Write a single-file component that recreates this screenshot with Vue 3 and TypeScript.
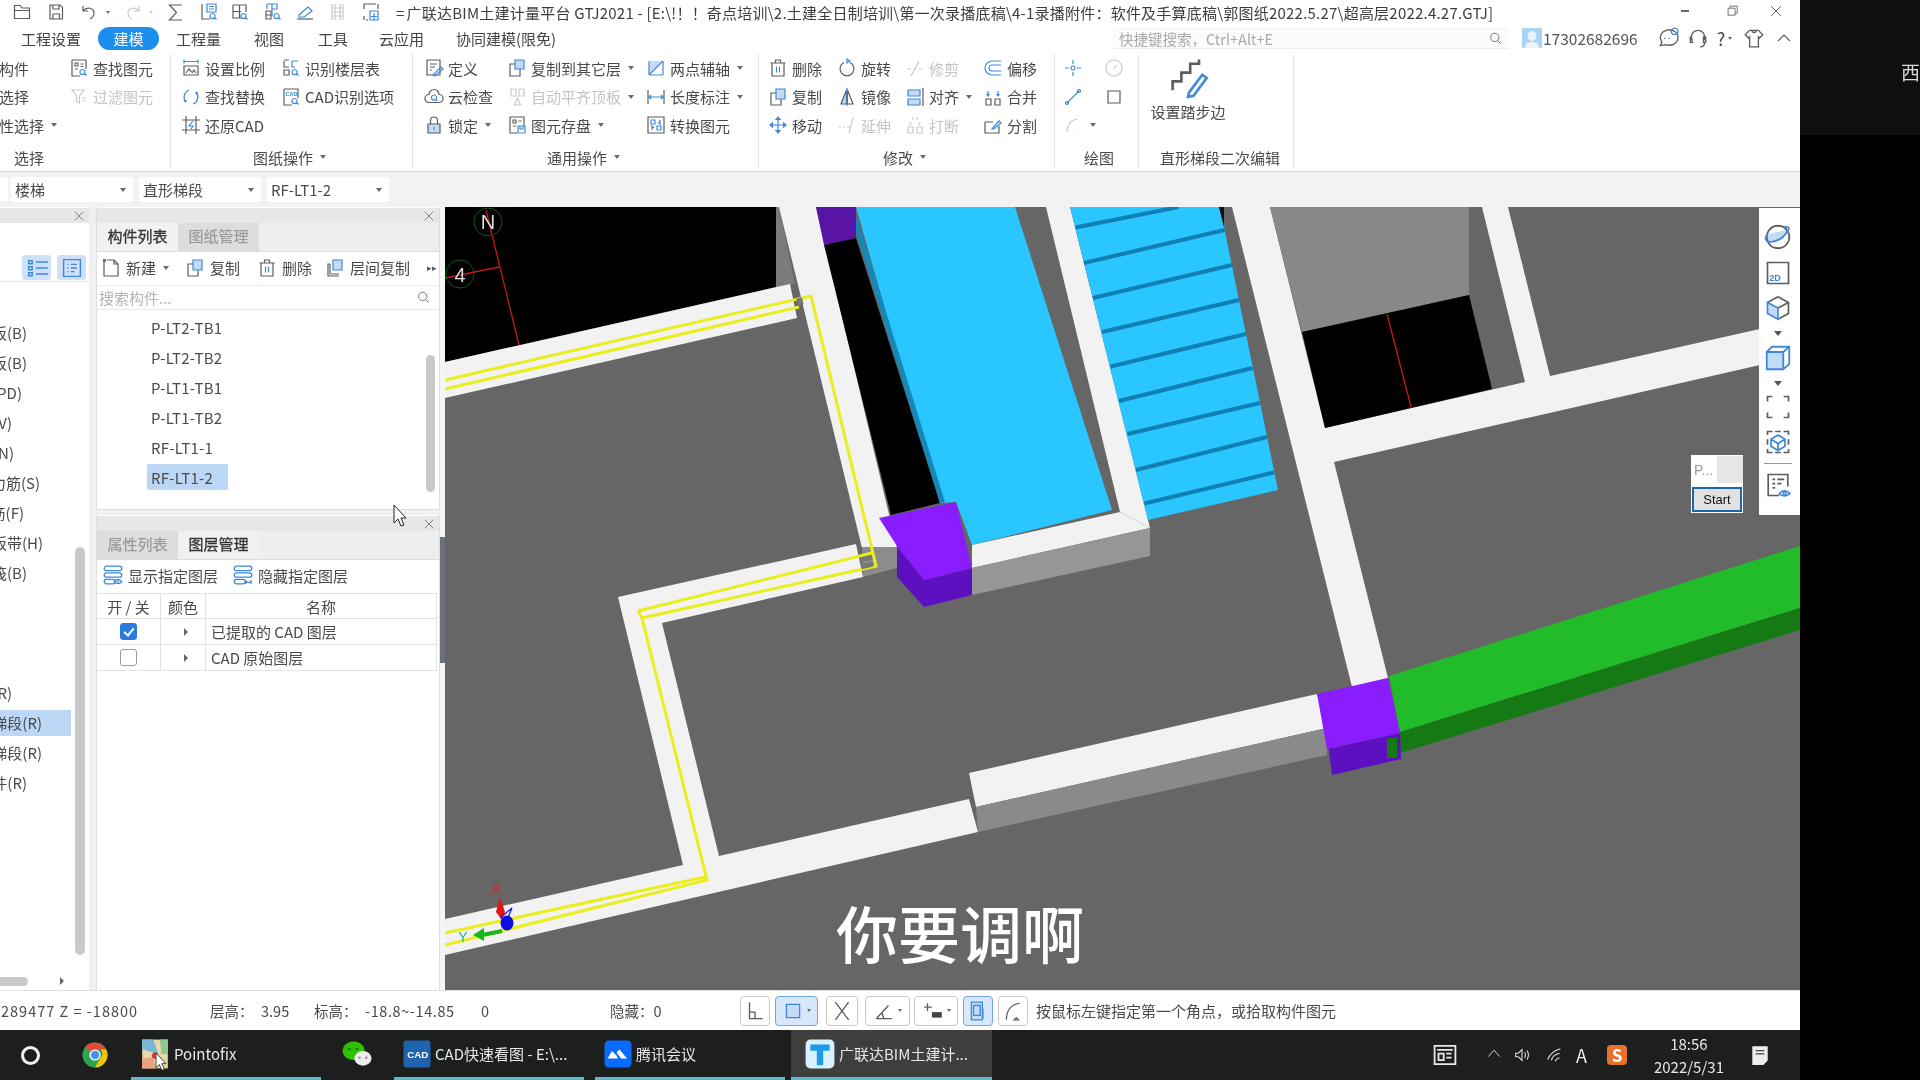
<template>
  <div class="screen">
    <div class="app">
      <!-- title bar -->
      <div class="titlebar">
        <div class="quick">
          <Ico v-for="q in quickIcons" :key="q.name" :name="q.name" :dis="q.dis" class="quick__ico" :style="{ left: q.x + 'px' }" />
          <i class="caret caret--s quick__caret" style="left: 103px" />
          <i class="caret caret--s caret--dis quick__caret" style="left: 146px" />
        </div>
        <div class="titlebar__text"><span class="titlebar__eq">=</span>{{ title }}</div>
        <div class="winctl">
          <span class="winctl__min" />
          <Ico name="restore" :size="14" />
          <Ico name="close" :size="16" />
        </div>
      </div>

      <!-- menu row -->
      <div class="menubar">
        <span
          v-for="m in menus"
          :key="m.text"
          class="menubar__item"
          :class="{ 'menubar__item--on': m.on }"
          :style="{ width: m.w + 'px', marginLeft: m.gap + 'px' }"
        >{{ m.text }}</span>
        <div class="quicksearch">
          <span>快捷键搜索，Ctrl+Alt+E</span>
          <Ico name="search" :size="15" />
        </div>
        <div class="user">
          <Ico name="avatar" class="user__avatar" :size="20" />
          <span class="user__no">17302682696</span>
        </div>
        <div class="helpicons">
          <Ico name="chat" :size="22" />
          <Ico name="headset" :size="22" />
          <span class="helpicons__q">?</span><i class="caret caret--s" />
          <Ico name="shirt" :size="22" />
          <Ico name="chevron" :size="20" />
        </div>
      </div>

      <!-- ribbon -->
      <div class="ribbon">
        <section v-for="g in ribbon" :key="g.label" class="rgroup" :style="{ width: g.w + 'px', paddingLeft: g.pad + 'px' }">
          <div class="rgroup__body">
            <div v-for="(col, ci) in g.cols" :key="ci" class="rcol" :style="{ width: col.w + 'px' }">
              <div
                v-for="(it, ii) in col.items"
                :key="ii"
                class="ritem"
                :class="{ 'ritem--dis': it.dis }"
              >
                <Ico v-if="it.icon" :name="it.icon" :dis="it.dis" />
                <span v-if="it.text" class="ritem__text" :class="{ 'ritem__text--bare': !it.icon }">{{ it.text }}</span>
                <i v-if="it.caret" class="caret" />
              </div>
            </div>
            <div v-if="g.big" class="rbig">
              <Ico name="stairs" :size="44" />
              <span>设置踏步边</span>
            </div>
          </div>
          <div class="rgroup__label" :style="{ marginLeft: g.labelX - g.pad + 'px' }">
            {{ g.label }}<i v-if="g.caret" class="caret" />
          </div>
        </section>
      </div>

      <!-- element selectors -->
      <div class="selectors">
        <div class="select select--cut" />
        <div v-for="s in selectors" :key="s" class="select">
          <span>{{ s }}</span><i class="caret" />
        </div>
      </div>

      <!-- workspace -->
      <div class="workspace">
        <aside class="nav">
          <div class="phead"><Ico name="x" :size="12" /></div>
          <div class="nav__views">
            <span class="nav__view"><Ico name="listview" :size="24" /></span>
            <span class="nav__view"><Ico name="cardview" :size="24" /></span>
          </div>
          <div class="nav__list">
            <div v-for="(n, i) in navItems" :key="i" class="nav__row">
              <span
                class="nav__item"
                :class="{ 'nav__item--on': n.on }"
                :style="{ width: n.on ? '71px' : n.end + 'px' }"
              ><span class="nav__label" :style="{ width: n.end + 'px' }">{{ n.text }}</span></span>
            </div>
          </div>
          <div class="nav__thumb" />
          <div class="nav__hthumb" />
          <i class="nav__harrow" />
        </aside>

        <div class="panels">
          <div class="panel panel--list">
            <div class="phead"><Ico name="x" :size="12" /></div>
            <div class="ptabs">
              <span class="ptab ptab--on">构件列表</span>
              <span class="ptab">图纸管理</span>
            </div>
            <div class="ptools">
              <span class="ptool" style="width: 84px"><Ico name="newdoc" /><b>新建</b><i class="caret" /></span>
              <span class="ptool" style="width: 72px"><Ico name="copy" /><b>复制</b></span>
              <span class="ptool" style="width: 68px"><Ico name="del" /><b>删除</b></span>
              <span class="ptool" style="width: 102px"><Ico name="layercopy" /><b>层间复制</b></span>
              <span class="ptool__more">▸▸</span>
            </div>
            <div class="psearch">
              <span>搜索构件...</span>
              <Ico name="search" :size="15" />
            </div>
            <div class="plist">
              <div
                v-for="row in parts"
                :key="row"
                class="plist__row"
                :class="{ 'plist__row--on': row === 'RF-LT1-2' }"
              >{{ row }}</div>
              <div class="plist__thumb" />
            </div>
          </div>

          <div class="panel panel--layers">
            <div class="phead"><Ico name="x" :size="12" /></div>
            <div class="ptabs">
              <span class="ptab">属性列表</span>
              <span class="ptab ptab--on">图层管理</span>
            </div>
            <div class="ltools">
              <span class="ptool"><Ico name="layershow" :size="22" /><b>显示指定图层</b></span>
              <span class="ptool"><Ico name="layerhide" :size="22" /><b>隐藏指定图层</b></span>
            </div>
            <div class="ltable">
              <div class="ltable__row ltable__row--head">
                <span>开 / 关</span><span>颜色</span><span>名称</span>
              </div>
              <div v-for="l in layers" :key="l.name" class="ltable__row">
                <span><i class="check" :class="{ 'check--on': l.on }" /></span>
                <span><i class="tri" /></span>
                <span class="ltable__name">{{ l.name }}</span>
              </div>
            </div>
          </div>
        </div>

        <div class="splitter"><i class="splitter__handle" /></div>

        <div class="canvas">
          <svg class="scene" viewBox="445 207 1355 783" width="1355" height="783">
            <rect x="445" y="207" width="1355" height="783" fill="#666" />

            <!-- upper left void with axis lines -->
            <polygon points="445,207 776,207 776,287 445,362" fill="#000" />
            <polygon points="776,207 779,207 795,284 776,288" fill="#7b7b7b" />
            <path d="M486 210 519 345M445 278 499 267" stroke="#c31a1a" stroke-width="1.3" fill="none" />
            <circle cx="488" cy="222" r="14" fill="none" stroke="#0c5a14" />
            <circle cx="460" cy="274" r="14" fill="none" stroke="#0c5a14" />
            <text x="488" y="229" class="scene__axis">N</text>
            <text x="460" y="282" class="scene__axis">4</text>

            <!-- slabs and walls -->
            <polygon points="445,362 790,284 797,318 445,398" fill="#f2f2f2" />
            <polygon points="779,207 816,207 897,548 862,548" fill="#f2f2f2" />
            <polygon points="618,597 856,544 863,577 662,623 719,856 969,799 978,832 445,955 445,919 683,865" fill="#f2f2f2" />
            <polygon points="862,547 897,547 897,568 863,577" fill="#8c8c8c" />
            <polygon points="816,207 856,207 856,238 824,245" fill="#5a14a5" />
            <polygon points="824,245 856,238 940,503 891,515" fill="#000" />

            <!-- stair flights -->
            <polygon points="856,207 1015,207 1112,510 972,545 956,502 940,503" fill="#29c6ff" />
            <polygon points="856,232 940,503 945,502 856,215" fill="#1488b8" />
            <polygon points="972,545 1120,512 1150,528 972,568" fill="#f2f2f2" />
            <polygon points="972,568 1150,528 1150,556 972,595" fill="#969696" />
            <polygon points="1046,207 1070,207 1150,528 1120,512" fill="#f2f2f2" />
            <polygon points="1070,207 1219,207 1224,227 1278,490 1148,520" fill="#29c6ff" />
            <polygon points="1219,207 1224,207 1224,227" fill="#111" />
            <line
              v-for="(s, i) in stairStripes"
              :key="i"
              :x1="s[0]" :y1="s[1]" :x2="s[2]" :y2="s[3]"
              stroke="#0f7fb4" stroke-width="4"
            />

            <!-- right hand wall, shaft -->
            <polygon points="1232,207 1270,207 1325,428 1525,382 1482,207 1508,207 1550,376 1800,320 1800,356 1334,462 1388,678 1352,687" fill="#f2f2f2" />
            <polygon points="1270,207 1469,207 1469,295 1302,332" fill="#888" />
            <polygon points="1302,332 1469,295 1492,389 1325,428" fill="#000" />
            <line x1="1387" y1="314" x2="1411" y2="407" stroke="#c31a1a" stroke-width="1.3" />

            <!-- raised beam and green beam -->
            <polygon points="969,773 1317,694 1327,728 976,807" fill="#f2f2f2" />
            <polygon points="976,807 1327,728 1327,755 978,832" fill="#8a8a8a" />
            <polygon points="1389,676 1800,546 1800,608 1400,732" fill="#22bb2a" />
            <polygon points="1400,732 1800,608 1800,630 1400,753" fill="#157a14" />

            <!-- yellow cad lines -->
            <g fill="none" stroke="#eaee1c" stroke-width="3">
              <path d="M445 380 811 296 876 566 642 618 707 880 445 945" />
              <path d="M445 389 799 307" />
              <path d="M638 611 872 553" />
              <path d="M638 611 642 618" />
              <path d="M705 877 445 933" />
            </g>
            <rect x="797" y="298" width="6" height="7" fill="#777" transform="rotate(-13 800 302)" />
            <rect x="860" y="556" width="12" height="5" fill="#777" transform="rotate(-13 866 558)" />
            <rect x="861" y="563" width="12" height="5" fill="#777" transform="rotate(-13 867 565)" />

            <!-- columns -->
            <polygon points="897,546 924,580 972,568 972,595 924,607 897,577" fill="#5c10bf" />
            <polygon points="879,518 956,502 972,568 924,580 897,546" fill="#8a1dfd" />
            <polygon points="1327,749 1400,733 1401,759 1332,775 1326,728" fill="#5c10bf" />
            <polygon points="1317,694 1388,678 1400,733 1327,749" fill="#8a1dfd" />
            <rect x="1387" y="738" width="10" height="20" fill="#157a14" />

            <!-- view axis -->
            <path d="M502 931 482 935" stroke="#17b71c" stroke-width="4" />
            <polygon points="473,935 484,928 484,941" fill="#17b71c" />
            <polygon points="500,897 505,912 502,920 496,912" fill="#e61414" />
            <path d="M500 918 512 908 505 925" stroke="#1414e0" stroke-width="1.2" fill="none" />
            <ellipse cx="507" cy="923" rx="6.5" ry="7.5" fill="#0d0de0" />
            <text x="496" y="893" class="scene__x">X</text>
            <text x="463" y="942" class="scene__y">Y</text>
          </svg>

          <div class="subtitle">你要调啊</div>

          <div class="viewbar">
            <Ico name="sphere" :size="30" />
            <Ico name="view2d" :size="28" />
            <Ico name="cube3d" :size="28" />
            <i class="viewbar__tri" />
            <Ico name="box" :size="30" />
            <i class="viewbar__tri" />
            <Ico name="corners" :size="28" />
            <Ico name="dashcube" :size="28" />
            <i class="viewbar__rule" />
            <Ico name="doceye" :size="28" />
          </div>

          <div class="recorder">
            <div class="recorder__top"><span>P...</span><i /></div>
            <div class="recorder__btn">Start</div>
          </div>
        </div>
      </div>

      <!-- status bar -->
      <div class="status">
        <span class="status__txt status__txt--wide" style="width: 209px">289477 Z = -18800</span>
        <span class="status__txt" style="width: 51px">层高：</span>
        <span class="status__txt" style="width: 53px">3.95</span>
        <span class="status__txt" style="width: 51px">标高：</span>
        <span class="status__txt status__txt--mid" style="width: 116px">-18.8~-14.85</span>
        <span class="status__txt" style="width: 129px">0</span>
        <span class="status__txt" style="width: 130px">隐藏：0</span>
        <div class="status__btns">
          <span
            v-for="b in statusBtns"
            :key="b.icon"
            class="sbtn"
            :class="{ 'sbtn--on': b.on }"
            :style="{ width: b.w + 'px', marginLeft: b.gap + 'px' }"
          ><Ico :name="b.icon" :size="22" /><i v-if="b.caret" class="caret caret--s" /></span>
        </div>
        <span class="status__hint">按鼠标左键指定第一个角点，或拾取构件图元</span>
      </div>

      <!-- taskbar -->
      <div class="taskbar">
        <span class="tb-cortana" />
        <span class="tb-slot"><Ico name="chrome" :size="28" /></span>
        <span class="tb-app tb-app--open" style="width: 190px"><Ico name="pointofix" :size="32" /><span>Pointofix</span></span>
        <span class="tb-slot tb-slot--we"><Ico name="wechat" :size="34" /></span>
        <span class="tb-app tb-app--open" style="width: 190px"><Ico name="cad" :size="30" /><span>CAD快速看图 - E:\...</span></span>
        <span class="tb-app tb-app--open tb-app--gap" style="width: 190px"><Ico name="tencent" :size="30" /><span>腾讯会议</span></span>
        <span class="tb-app tb-app--open tb-app--active" style="width: 201px"><Ico name="glodon" :size="32" /><span>广联达BIM土建计...</span></span>
        <div class="tray">
          <Ico name="news" :size="26" />
          <Ico name="trayup" :size="16" />
          <Ico name="speaker" :size="18" />
          <Ico name="wifi" :size="18" />
          <span class="tray__a">A</span>
          <span class="tray__sogou">S</span>
          <div class="tray__clock"><span>18:56</span><span>2022/5/31</span></div>
          <Ico name="notify" :size="22" />
        </div>
      </div>
    </div>

    <div class="outside">
      <div class="outside__top"><span>西</span></div>
    </div>

    <svg class="cursor cursor--a" width="14" height="24" viewBox="0 0 14 24"><path d="M1 1v18l4-4 3 7 3-1-3-7h5z" fill="#fff" stroke="#222" /></svg>
    <svg class="cursor cursor--b" width="12" height="20" viewBox="0 0 14 24"><path d="M1 1v18l4-4 3 7 3-1-3-7h5z" fill="#fff" stroke="#222" /></svg>
  </div>
</template>

<script setup lang="ts">
import { h } from 'vue';
import type { FunctionalComponent } from 'vue';

interface IconDef {
  f?: string; // light blue fill
  d?: string; // dark stroke
  b?: string; // blue stroke
  s?: string; // solid fill
  sc?: string; // solid fill colour
  t?: [string, number, number, number, string]; // label, x, y, size, colour
}

const SEARCH = 'M13.5 11.5a2.6 2.6 0 1 0 .01 0M15.5 15.5l2 2';
const icons: Record<string, IconDef> = {
  folder: { d: 'M2.5 16.5V3.5h5.5l2 2.5h7.5v10.5zM2.5 8.5h15' },
  save: { d: 'M4 3h10l2.5 2.5v11.5H4zM7 3v4h6V3M7 17v-5h6.5v5' },
  undo: { d: 'M4 4v5h5M4 9c4-5 11-3 11 2 0 3-2 5-4 6' },
  redo: { d: 'M16 4v5h-5M16 9c-4-5-11-3-11 2 0 3 2 5 4 6' },
  sigma: { d: 'M16 3H3.5l7 7.5-7 7.5H16' },
  listq: { d: 'M3 2v15h8', b: 'M8 2h9v8H8zM10 4.5h5M10 7h5' + SEARCH },
  gridq: { d: 'M3 3h13v7M3 3v13h8M9.5 3v13M3 9.5h8', b: SEARCH },
  splitq: { d: 'M3 9h5v8H3zM3 13h5', b: 'M9 2h5v5H9zM9 2v12M4 2h5M4 2v5' + SEARCH },
  pen: { d: 'M2 17h16', b: 'M4 13l9-8 4 4-8 6H4z' },
  rung: { d: 'M4 2v16M15 2v16M4 6h11M4 10h11M4 14h11M7 2v16M12 2v16' },
  transfer: { d: 'M5 2h10M5 2H3v5M17 2v5M3 18v-4M5 18h2', b: 'M13 11v7M10 14.5h6M9 9h8v9H9z' },
  findel: { d: 'M3 2h14v9M3 2v16h8M6 5h3v3H6zM11.5 6h3M6 11h3M11.5 8.5h3', b: SEARCH },
  filter: { d: 'M3 3h12l-4.5 6v7l-3-1.5V9zM13 11h4M13 14h4' },
  setscale: { b: 'M3 3.5h14M3 1.5v4M17 1.5v4', d: 'M3 8h14v9H3zM5 15l3-4 2.5 3M11 15l2-3 2 3' },
  replace: { b: 'M8 3a7.5 7.5 0 0 0-3 12M5 15l-2-1M5 15v-2M12 17a7.5 7.5 0 0 0 3-12M15 5l2 1M15 5v2' },
  restorecad: { d: 'M5 1v18M15 1v18M1 5h18M1 15h18', b: 'M12 6l-4 5h4l-2 3' },
  floorq: { d: 'M3 3v6h5M3 2h5M3 12h5v5H3z', b: 'M11 3h6M11 3v6h3' + SEARCH },
  cadopt: { d: 'M3 2h14v9M3 2v16h8', t: ['CAD', 4.5, 9, 5.5, '#2f7fd0'], b: SEARCH },
  define: { d: 'M3 2h13v15H3zM6 6h7M6 9h5M6 12h2', b: 'M9 17l8-8 2 2-8 7z' },
  cloud: { d: 'M5 15.5a4 4 0 0 1 0-8 5 5 0 0 1 10 0 4 4 0 0 1 0 8z', b: 'M10 8a2.6 2.6 0 1 0 .01 0M12 13l1.5 1' },
  lock: { f: 'M4 9h12v9H4z', d: 'M4 9h12v9H4zM6.5 9V5.5a3.5 3.5 0 0 1 7 0V9', b: 'M10 12v3' },
  copyto: { f: 'M8 2h9v9H8z', b: 'M8 2h9v9H8z', d: 'M8 6H3v12h10v-7' },
  autoalign: { d: 'M4 2h5v7H4zM12 2h5v7h-5zM10.5 11l3 7h-6z' },
  saveel: { d: 'M3 2h14v9M3 2v16h7M6 5h3v3H6zM11.5 6h3M6 11h3', b: 'M11 11h7v7h-7zM13 11v3h3v-3' },
  twopoint: { b: 'M3 17 17 3M3 3v14M3 17h14M17 3v14', f: 'M3 3 17 3 3 17z' },
  dim: { d: 'M2 3v14M18 3v14', b: 'M3 10h14M5 8l-2 2 2 2M15 8l2 2-2 2' },
  convert: { d: 'M2 2h16v16H2z', b: 'M5 5h4v4H5zM11 11h4v4h-4zM14 5v4l-2-2M6 15v-4l2 2' },
  del: { d: 'M4 5h12v13H4zM2.5 5h15M7.5 5V2h5v3', b: 'M8.5 8.5v6M11.5 8.5v6' },
  copy: { f: 'M8 2h9v10H8z', b: 'M8 2h9v10H8z', d: 'M8 6H3v12h10v-6' },
  move: { b: 'M10 2v16M2 10h16M10 2 8 4.5h4zM10 18l-2-2.5h4zM2 10l2.5-2v4zM18 10l-2.5-2v4z' },
  rotate: { d: 'M7 4.5a7 7 0 1 0 6 0', b: 'M10 1v4l3-2z' },
  mirror: { f: 'M9.5 3 4 17h5.5z', d: 'M9.5 3 4 17h5.5zM10.5 3 16 17h-5.5z', b: 'M10 1v18' },
  trim: { d: 'M2 11h4M9 11h2M14 11h3M14 3 6 18' },
  align: { f: 'M3 3h12v6H3zM3 12h12v6H3z', b: 'M3 3h12v6H3zM3 12h12v6H3z', d: 'M18 1v18' },
  extend: { d: 'M2 12h2M6 12h2M10 12h3M16 3 12 18' },
  breakel: { d: 'M3 12h5v6H3zM12 12h5v6h-5zM5 7l1 3M15 7l-1 3M8 2v3M12 2v3' },
  offset: { b: 'M18 3H9a7 7 0 0 0 0 14h9M18 7H9a3 3 0 0 0 0 6h9' },
  merge: { d: 'M3 12h5v6H3zM12 12h5v6h-5z', b: 'M5 4v5M15 4v5M3.5 7 5 9l1.5-2M13.5 7 15 9l1.5-2' },
  splitel: { d: 'M2 7h8M2 7v11h14v-7', b: 'M9 14l7-8 2 2-7 6z' },
  point: { b: 'M10 2v4M10 14v4M2 10h4M14 10h4M10 8a2 2 0 1 0 .01 0' },
  clock: { d: 'M10 2a8 8 0 1 0 .01 0M10 10l3-3' },
  linedraw: { b: 'M4 16 16 4M4 14.5a1.5 1.5 0 1 0 .01 0M16 2.5a1.5 1.5 0 1 0 .01 0' },
  rectdraw: { d: 'M4 4h12v12H4z' },
  arcdraw: { d: 'M4 17C4 10 8 5 14 4M15 16h1' },
  stairs: { d: 'M3 16V12h4V8h4V4h4V2', b: 'M10.5 17l6-8 2 1.5-6 8-2.5.5z' },
  search: { d: 'M9 3a5.5 5.5 0 1 0 .01 0M13 13l4 4' },
  avatar: { s: 'M0 0h20v20H0z', sc: '#a9d3f7', f: 'M3 20c0-5 3-6 7-6s7 1 7 6zM10 3a4.5 5 0 1 0 .01 0' },
  chat: { d: 'M3 17l1.5-3.5A8 7 0 1 1 8 16zM7 10v1M11 10v1', b: 'M16 1a3 3 0 1 0 .01 0' },
  headset: { d: 'M4 12V9a6 6 0 0 1 12 0v3M4 9H3v5h2zM15 9h2v5h-2zM16 14c0 3-2 4-4 4' },
  shirt: { d: 'M6 3h8l4 4-3 3-1-1v9H6V9l-1 1-3-3zM8 3a2 2 0 0 0 4 0' },
  chevron: { d: 'M4 13l6-6 6 6' },
  restore: { d: 'M3 6h10v10H3zM6 6V3h10v10h-3' },
  close: { d: 'M4 4l12 12M16 4 4 16' },
  x: { d: 'M3 3l14 14M17 3 3 17' },
  listview: { b: 'M9 5h10M9 10h10M9 15h10M3 4h3v2.5H3zM3 9h3v2.5H3zM3 14h3v2.5H3z' },
  cardview: { b: 'M3 3h14v14H3zM6 7h1M9 7h5M6 10h1M9 10h5M6 13h1M9 13h3' },
  newdoc: { d: 'M3 2v16h14V6l-4-4H6M13 2v4h4', s: 'M2 1h3v3H2z', sc: '#3b82d6' },
  layercopy: { f: 'M8 2h9v10H8z', b: 'M8 2h9v10H8z', d: 'M5 6H3v12h11M5 6v10h9' },
  layershow: { b: 'M4 2h12a2 2 0 0 1 0 4H4a2 2 0 0 1 0-4zM4 8h12a2 2 0 0 1 0 4H4a2 2 0 0 1 0-4zM4 14h6a2 2 0 0 1 0 4H4a2 2 0 0 1 0-4zM11 16c2-2.5 5-2.5 7 0-2 2.5-5 2.5-7 0zM14.5 15v2' },
  layerhide: { b: 'M4 2h12a2 2 0 0 1 0 4H4a2 2 0 0 1 0-4zM4 8h12a2 2 0 0 1 0 4H4a2 2 0 0 1 0-4zM4 14h6a2 2 0 0 1 0 4H4a2 2 0 0 1 0-4zM12 15c2 2.5 4 2.5 6 0M13 17l-1 1M17 17l1 1' },
  sphere: { f: 'M3 8c-3 4 0 6 4 5 5-1 8-4 10-8z', d: 'M10 2.5a7.5 7.5 0 1 0 .01 0', b: 'M3 8c-3 4 0 6 4 5 5-1 8-4 10-8 1-2-2-2-3-1' },
  view2d: { d: 'M2.5 2.5h15v15h-15z', t: ['2D', 3.8, 16, 6.5, '#3d86d6'] },
  cube3d: { f: 'M2.5 6 10 10v8l-7.5-4z', d: 'M10 2l7.5 4v8L10 18M10 2 2.5 6M10 10l7.5-4', b: 'M2.5 6 10 10v8l-7.5-4z' },
  box: { f: 'M2.5 6h11v11.5h-11z', b: 'M2.5 6h11v11.5h-11zM2.5 6 6 2.5h11.5v11.5L13.5 17.5M13.5 6l4-3.5' },
  corners: { d: 'M2.5 6V2.5H6M14 2.5h3.5V6M2.5 14v3.5H6M14 17.5h3.5V14' },
  dashcube: { d: 'M2.5 5V2.5H6M8 2.5h4M14 2.5h3.5V5M2.5 8v4M17.5 8v4M2.5 15v2.5H6M8 17.5h4M14 17.5h3.5V15', b: 'M10 5l5 3v5l-5 3-5-3V8zM5 8l5 3 5-3M10 11v5' },
  doceye: { d: 'M17 11V2.5H3v15h8M6 6h2M9.5 6h5M6 9h2M9.5 9h3M6 12h2', b: 'M11 16c2-2.5 5-2.5 7.5 0-2.5 2.5-5.5 2.5-7.5 0zM14.7 15a1 1 0 1 0 .01 0' },
  ortho: { d: 'M5 2v15h12M5 11h5v6' },
  rectsnap: { f: 'M4 4h12v12H4z', b: 'M4 4h12v12H4z' },
  cross: { d: 'M4 2l12 16M16 2 4 18' },
  anglesnap: { d: 'M3 17h14M3 17 14 5M8 11.5l2 5.5' },
  plusbox: { d: 'M5 3v7M2 6.5h7', s: 'M9 11h9v5H9z', sc: '#444' },
  devmode: { f: 'M4 2h10v16H4z', b: 'M4 2h10v16H4zM6 5h6v9H6z', s: 'M8 8h7v9H8z', sc: '#2f7fd0' },
  arcsnap: { d: 'M4 18C4 10 8 4 16 3M13 16l2 2h-4z' },
  chrome: { s: 'M10 1a9 9 0 1 0 .01 0', sc: '#2ea44f' },
  pointofix: { s: 'M2 1h16v18H2z', sc: '#e8d9a8' },
  wechat: { s: 'M8 2a6.5 5.5 0 1 0 .01 0', sc: '#2dc100' },
  cad: { s: 'M3 1h14a2 2 0 0 1 2 2v14a2 2 0 0 1-2 2H3a2 2 0 0 1-2-2V3a2 2 0 0 1 2-2z', sc: '#1f63ad', t: ['CAD', 3.5, 12.5, 6.5, '#fff'] },
  tencent: { s: 'M4 1h12a3 3 0 0 1 3 3v12a3 3 0 0 1-3 3H4a3 3 0 0 1-3-3V4a3 3 0 0 1 3-3z', sc: '#0a6cff' },
  glodon: { s: 'M4 1h12a3 3 0 0 1 3 3v12a3 3 0 0 1-3 3H4a3 3 0 0 1-3-3V4a3 3 0 0 1 3-3z', sc: '#d9f1ff' },
  news: {},
  trayup: { d: 'M3 12l7-8 7 8' },
  speaker: { d: 'M3 8v4h3l4 4V4L6 8zM13 7c1 2 1 4 0 6M15.5 5c2 3 2 7 0 10' },
  wifi: { d: 'M2 15C4 9 9 5 16 3M6 16c1-4 4-7 9-8M10 17c1-2 2-3 5-4' },
  notify: { s: 'M3 2h14v13l-4 4H3z', sc: '#eee' },
};

const Ico: FunctionalComponent<{ name: string; dis?: boolean; size?: number }> = (p) => {
  const def = icons[p.name] ?? {};
  const size = p.size ?? 20;
  const dark = p.dis ? '#c9c9c9' : '#5d5d5d';
  const blue = p.dis ? '#c9c9c9' : '#3f88da';
  const kids = [];
  if (def.s) kids.push(h('path', { d: def.s, fill: def.sc }));
  if (def.f) kids.push(h('path', { d: def.f, fill: p.name === 'avatar' ? '#eaf4fe' : '#c3dbf6' }));
  if (p.name === 'chrome') {
    kids.push(h('path', { d: 'M10 1a9 9 0 0 1 8 5h-8a4 4 0 0 0-3.5 2L3 4a9 9 0 0 1 7-3z', fill: '#e04a3a' }));
    kids.push(h('path', { d: 'M18 6a9 9 0 0 1-8 13l4-7a4 4 0 0 0 0-6z', fill: '#f4c20d' }));
    kids.push(h('circle', { cx: 10, cy: 10, r: 4, fill: '#fff' }));
    kids.push(h('circle', { cx: 10, cy: 10, r: 3, fill: '#4a8ef0' }));
  }
  if (p.name === 'pointofix') {
    kids.push(h('path', { d: 'M2 1h7l3 9-10-3z', fill: '#7ab6d8' }));
    kids.push(h('path', { d: 'M2 13l7-1 1 7H2z', fill: '#e8a27c' }));
    kids.push(h('path', { d: 'M13 1h5v9h-4z', fill: '#8fc98f' }));
    kids.push(h('circle', { cx: 10, cy: 11, r: 2, fill: '#d63b3b' }));
  }
  if (p.name === 'wechat') {
    kids.push(h('ellipse', { cx: 13.5, cy: 12, rx: 5, ry: 4.3, fill: '#eee' }));
    kids.push(h('path', { d: 'M5.5 6v1M10 6v1', stroke: '#145c00', 'stroke-width': 1.4 }));
    kids.push(h('path', { d: 'M11.5 11v1M15.5 11v1', stroke: '#777', 'stroke-width': 1.2 }));
  }
  if (p.name === 'tencent') {
    kids.push(h('path', { d: 'M3 13l3-5 3 3 1 2zM9 9l2-2 5 6h-4z', fill: '#fff' }));
  }
  if (p.name === 'glodon') {
    kids.push(h('path', { d: 'M4 4h12v4h-4v9H8V8H4z', fill: '#1d9be8' }));
  }
  if (p.name === 'news') {
    kids.push(h('path', { d: 'M2 3h16v14H2zM4 6h12M5 9h4v5H5zM11 9h4M11 12h4', stroke: '#e8e8e8', 'stroke-width': 1.4, fill: 'none' }));
  }
  if (p.name === 'notify') {
    kids.push(h('path', { d: 'M6 6h8M6 9h8', stroke: '#444' }));
  }
  const onDark = ['trayup', 'speaker', 'wifi'].includes(p.name);
  if (def.d) kids.push(h('path', { d: def.d, fill: 'none', stroke: onDark ? '#ddd' : dark, 'stroke-width': 1.2 }));
  if (def.b) kids.push(h('path', { d: def.b, fill: 'none', stroke: blue, 'stroke-width': 1.2 }));
  if (def.t) {
    const [label, x, y, fs, color] = def.t;
    kids.push(h('text', { x, y, 'font-size': fs, 'font-family': 'Liberation Sans, sans-serif', 'font-weight': 700, fill: color }, label));
  }
  return h('svg', { class: 'ico', width: size, height: size, viewBox: '0 0 20 20' }, kids);
};

const title =
  '广联达BIM土建计量平台 GTJ2021 - [E:\\!！！奇点培训\\2.土建全日制培训\\第一次录播底稿\\4-1录播附件：软件及手算底稿\\郭图纸2022.5.27\\超高层2022.4.27.GTJ]';

const quickIcons = [
  { name: 'folder', x: 12 },
  { name: 'save', x: 46 },
  { name: 'undo', x: 79 },
  { name: 'redo', x: 123, dis: true },
  { name: 'sigma', x: 166 },
  { name: 'listq', x: 199 },
  { name: 'gridq', x: 230 },
  { name: 'splitq', x: 263 },
  { name: 'pen', x: 295 },
  { name: 'rung', x: 328, dis: true },
  { name: 'transfer', x: 361 },
];

const menus = [
  { text: '工程设置', w: 60, gap: 21 },
  { text: '建模', w: 61, gap: 17, on: true },
  { text: '工程量', w: 45, gap: 17 },
  { text: '视图', w: 30, gap: 33 },
  { text: '工具', w: 30, gap: 34 },
  { text: '云应用', w: 45, gap: 31 },
  { text: '协同建模(限免)', w: 100, gap: 32 },
];

interface RItem { icon?: string; text?: string; caret?: boolean; dis?: boolean }
interface RGroup {
  label: string; w: number; pad: number; labelX: number; caret?: boolean; big?: boolean;
  cols: { w: number; items: RItem[] }[];
}

const ribbon: RGroup[] = [
  {
    label: '选择', w: 171, pad: 0, labelX: 14,
    cols: [
      { w: 69, items: [{ text: '构件' }, { text: '选择' }, { text: '性选择', caret: true }] },
      { w: 90, items: [{ icon: 'findel', text: '查找图元' }, { icon: 'filter', text: '过滤图元', dis: true }] },
    ],
  },
  {
    label: '图纸操作', w: 242, pad: 10, labelX: 82, caret: true,
    cols: [
      { w: 100, items: [{ icon: 'setscale', text: '设置比例' }, { icon: 'replace', text: '查找替换' }, { icon: 'restorecad', text: '还原CAD' }] },
      { w: 125, items: [{ icon: 'floorq', text: '识别楼层表' }, { icon: 'cadopt', text: 'CAD识别选项' }] },
    ],
  },
  {
    label: '通用操作', w: 346, pad: 11, labelX: 134, caret: true,
    cols: [
      { w: 83, items: [{ icon: 'define', text: '定义' }, { icon: 'cloud', text: '云检查' }, { icon: 'lock', text: '锁定', caret: true }] },
      { w: 139, items: [{ icon: 'copyto', text: '复制到其它层', caret: true }, { icon: 'autoalign', text: '自动平齐顶板', caret: true, dis: true }, { icon: 'saveel', text: '图元存盘', caret: true }] },
      { w: 110, items: [{ icon: 'twopoint', text: '两点辅轴', caret: true }, { icon: 'dim', text: '长度标注', caret: true }, { icon: 'convert', text: '转换图元' }] },
    ],
  },
  {
    label: '修改', w: 296, pad: 9, labelX: 124, caret: true,
    cols: [
      { w: 69, items: [{ icon: 'del', text: '删除' }, { icon: 'copy', text: '复制' }, { icon: 'move', text: '移动' }] },
      { w: 68, items: [{ icon: 'rotate', text: '旋转' }, { icon: 'mirror', text: '镜像' }, { icon: 'extend', text: '延伸', dis: true }] },
      { w: 78, items: [{ icon: 'trim', text: '修剪', dis: true }, { icon: 'align', text: '对齐', caret: true }, { icon: 'breakel', text: '打断', dis: true }] },
      { w: 70, items: [{ icon: 'offset', text: '偏移' }, { icon: 'merge', text: '合并' }, { icon: 'splitel', text: '分割' }] },
    ],
  },
  {
    label: '绘图', w: 84, pad: 8, labelX: 29,
    cols: [
      { w: 41, items: [{ icon: 'point' }, { icon: 'linedraw' }, { icon: 'arcdraw', caret: true, dis: true }] },
      { w: 30, items: [{ icon: 'clock', dis: true }, { icon: 'rectdraw' }] },
    ],
  },
  { label: '直形梯段二次编辑', w: 155, pad: 0, labelX: 21, big: true, cols: [] },
];

const selectors = ['楼梯', '直形梯段', 'RF-LT1-2'];

const navItems = [
  { text: '板(B)', end: 27 },
  { text: '板(B)', end: 27 },
  { text: '(PD)', end: 22 },
  { text: 'V)', end: 12 },
  { text: 'N)', end: 14 },
  { text: '力筋(S)', end: 40 },
  { text: '筋(F)', end: 24 },
  { text: '板带(H)', end: 43 },
  { text: '筏(B)', end: 27 },
  { text: '', end: 0 },
  { text: '', end: 0 },
  { text: '', end: 0 },
  { text: 'R)', end: 12 },
  { text: '梯段(R)', end: 42, on: true },
  { text: '梯段(R)', end: 42 },
  { text: '件(R)', end: 27 },
];

const parts = ['P-LT2-TB1', 'P-LT2-TB2', 'P-LT1-TB1', 'P-LT1-TB2', 'RF-LT1-1', 'RF-LT1-2'];

const layers = [
  { name: '已提取的 CAD 图层', on: true },
  { name: 'CAD 原始图层', on: false },
];

const stairStripes = [
  [1075.5, 227.5, 1178.6, 207],
  [1084, 263, 1224.5, 230],
  [1093, 298, 1232, 265],
  [1102, 332, 1239, 300],
  [1110.7, 366.5, 1246, 334],
  [1119, 401, 1252.5, 368],
  [1127.5, 434, 1260, 403],
  [1136, 470, 1267, 437],
  [1144.4, 503.5, 1274, 472.5],
];

const statusBtns = [
  { icon: 'ortho', w: 30, gap: 0 },
  { icon: 'rectsnap', w: 43, gap: 5, on: true, caret: true },
  { icon: 'cross', w: 32, gap: 8 },
  { icon: 'anglesnap', w: 45, gap: 7, caret: true },
  { icon: 'plusbox', w: 44, gap: 4, caret: true },
  { icon: 'devmode', w: 30, gap: 5, on: true },
  { icon: 'arcsnap', w: 30, gap: 5 },
];
</script>

<style>
html,
body {
  margin: 0;
  background: #000;
}
</style>

<style scoped>
.screen {
  position: relative;
  display: flex;
  width: 1920px;
  height: 1080px;
  overflow: hidden;
  font-family: "Noto Sans CJK SC", "Noto Sans", sans-serif;
  font-size: 15px;
  color: #4a4a4a;
  background: #000;
  filter: blur(0.35px);
}

.app {
  display: flex;
  flex-direction: column;
  width: 1800px;
  flex: none;
  background: #fff;
}

.ico {
  display: block;
  flex: none;
}

b {
  font-weight: 400;
}

i {
  display: block;
  font-style: normal;
}

.caret {
  flex: none;
  width: 0;
  height: 0;
  margin-left: 7px;
  border-left: 3.5px solid transparent;
  border-right: 3.5px solid transparent;
  border-top: 4px solid #6b6b6b;
}

.caret--s {
  margin-left: 3px;
  border-left-width: 2.5px;
  border-right-width: 2.5px;
  border-top-width: 3px;
}

.caret--dis {
  border-top-color: #ccc;
}

/* Title bar ------------------------------------------------------ */
.titlebar {
  position: relative;
  display: flex;
  align-items: center;
  height: 25px;
  flex: none;
}

.quick {
  position: relative;
  width: 396px;
  height: 25px;
  flex: none;
}

.quick__ico {
  position: absolute;
  top: 2px;
}

.quick__caret {
  position: absolute;
  top: 11px;
}

.titlebar__eq {
  margin-right: 2px;
}

.titlebar__text {
  font-size: 15px;
  letter-spacing: 0.22px;
  color: #3d3d3d;
  white-space: nowrap;
}

.winctl {
  position: absolute;
  right: 16px;
  top: 3px;
  display: flex;
  align-items: center;
}

.winctl__min {
  width: 8px;
  height: 2px;
  margin-right: 37px;
  background: #666;
}

.winctl .ico:last-child {
  margin-left: 28px;
}

/* Menu ------------------------------------------------------------ */
.menubar {
  display: flex;
  align-items: center;
  height: 26px;
  flex: none;
}

.menubar__item {
  flex: none;
  height: 23px;
  line-height: 23px;
  text-align: center;
  white-space: nowrap;
  color: #444;
}

.menubar__item--on {
  border-radius: 12px;
  background: #1d8eee;
  color: #fff;
}

.quicksearch {
  display: flex;
  align-items: center;
  justify-content: space-between;
  box-sizing: border-box;
  width: 396px;
  height: 21px;
  margin-left: 557px;
  padding: 0 6px;
  font-size: 14.5px;
  color: #aaa;
  background: #fbfbfb;
  border-bottom: 1px solid #eee;
  border-top: 1px solid #f3f3f3;
}

.user {
  display: flex;
  align-items: center;
  margin-left: 13px;
}

.user__no {
  margin-left: 1px;
  font-size: 15.5px;
  color: #555;
}

.helpicons {
  display: flex;
  align-items: center;
  margin-left: 19px;
}

.helpicons > :nth-child(2) {
  margin-left: 8px;
}

.helpicons__q {
  margin-left: 8px;
  font-size: 18px;
}

.helpicons > :nth-child(5) {
  margin-left: 11px;
}

.helpicons > :nth-child(6) {
  margin-left: 9px;
}

/* Ribbon ---------------------------------------------------------- */
.ribbon {
  display: flex;
  height: 121px;
  flex: none;
  padding-top: 3px;
  box-sizing: border-box;
  border-bottom: 1px solid #dcdcdc;
}

.rgroup {
  display: flex;
  flex-direction: column;
  flex: none;
  box-sizing: border-box;
  height: 114px;
  border-right: 1px solid #e4e4e4;
}

.rgroup__body {
  display: flex;
  flex: 1;
}

.rcol {
  flex: none;
}

.ritem {
  display: flex;
  align-items: center;
  height: 28.5px;
}

.ritem--dis {
  color: #c4c4c4;
}

.ritem__text {
  margin-left: 4px;
  white-space: nowrap;
}

.ritem__text--bare {
  margin-left: -1px;
}

.rgroup__label {
  display: flex;
  align-items: center;
  height: 22px;
  white-space: nowrap;
}

.rbig {
  display: flex;
  flex-direction: column;
  align-items: center;
  width: 98px;
  padding-top: 1px;
}

.rbig span {
  margin-top: 2px;
  white-space: nowrap;
}

/* Selectors ------------------------------------------------------- */
.selectors {
  display: flex;
  align-items: center;
  gap: 6px;
  height: 35px;
  flex: none;
  background: #f2f2f2;
}

.select {
  display: flex;
  align-items: center;
  justify-content: space-between;
  box-sizing: border-box;
  width: 122px;
  height: 25px;
  padding: 0 7px 0 4px;
  background: #fff;
  border-radius: 3px;
}

.select--cut {
  width: 8px;
  margin-right: -3px;
  padding: 0;
}

/* Workspace ------------------------------------------------------- */
.workspace {
  display: flex;
  flex: 1;
  min-height: 0;
  background: #f0f0f0;
}

.phead {
  display: flex;
  align-items: center;
  justify-content: flex-end;
  height: 15px;
  margin-top: 1px;
  padding-right: 4px;
  background: #e7e7e7;
}

.nav {
  position: relative;
  width: 89px;
  flex: none;
  margin-right: 7px;
  overflow: hidden;
  background: #fff;
}

.nav__views {
  display: flex;
  justify-content: flex-end;
  gap: 6px;
  height: 59px;
  box-sizing: border-box;
  padding: 32px 3px 0 0;
  border-bottom: 1px solid #e8e8e8;
}

.nav__view {
  display: flex;
  align-items: center;
  justify-content: center;
  width: 29px;
  height: 25px;
  border-radius: 3px;
  background: #cfe1f7;
}

.nav__list {
  padding-top: 36px;
}

.nav__row {
  display: flex;
  align-items: center;
  height: 30px;
}

.nav__item {
  display: block;
  overflow: hidden;
  height: 26px;
  line-height: 26px;
}

.nav__item--on {
  background: #bcd6f6;
}

.nav__label {
  display: flex;
  justify-content: flex-end;
  overflow: hidden;
  white-space: nowrap;
}

.nav__thumb {
  position: absolute;
  left: 75px;
  top: 340px;
  width: 10px;
  height: 408px;
  border-radius: 5px;
  background: #c9c9c9;
}

.nav__hthumb {
  position: absolute;
  left: 0;
  top: 770px;
  width: 28px;
  height: 9px;
  border-radius: 0 5px 5px 0;
  background: #c9c9c9;
}

.nav__harrow {
  position: absolute;
  left: 60px;
  top: 770px;
  border-left: 4px solid #666;
  border-top: 4.5px solid transparent;
  border-bottom: 4.5px solid transparent;
}

.panels {
  display: flex;
  flex-direction: column;
  gap: 5px;
  width: 344px;
  flex: none;
}

.panel {
  display: flex;
  flex-direction: column;
  background: #fff;
  border-left: 1px solid #dedede;
  border-right: 1px solid #dedede;
  box-sizing: border-box;
}

.panel--list {
  height: 303px;
  border-bottom: 1px solid #dedede;
}

.panel--layers {
  flex: 1;
}

.ptabs {
  display: flex;
  height: 28px;
  flex: none;
  background: #eeeeee;
  border-bottom: 1px solid #dedede;
}

.ptab {
  display: flex;
  align-items: center;
  justify-content: center;
  box-sizing: border-box;
  width: 81px;
  height: 28px;
  padding-bottom: 3px;
  font-size: 15px;
  color: #999;
  background: #dddddd;
  -webkit-text-stroke: 0.2px #999;
}

.ptab--on {
  color: #333;
  background: #f1f1f1;
  -webkit-text-stroke: 0.3px #333;
}

.ptools {
  position: relative;
  display: flex;
  align-items: center;
  height: 34px;
  flex: none;
  box-sizing: border-box;
  padding-left: 4px;
  padding-bottom: 2px;
  border-bottom: 1px solid #eee;
}

.ptool {
  display: flex;
  align-items: center;
  flex: none;
  white-space: nowrap;
}

.ptool b {
  margin-left: 5px;
}

.ptool__more {
  font-size: 9px;
  color: #555;
}

.psearch {
  display: flex;
  align-items: center;
  justify-content: space-between;
  box-sizing: border-box;
  height: 24px;
  flex: none;
  padding: 0 8px 0 2px;
  color: #b3b3b3;
  border-bottom: 1px solid #e9e9e9;
}

.plist {
  position: relative;
  flex: 1;
  padding-top: 4px;
}

.plist__row {
  display: flex;
  align-items: center;
  box-sizing: border-box;
  width: 81px;
  height: 26px;
  margin: 0 0 4px 50px;
  padding-left: 4px;
  letter-spacing: 0.25px;
  border-radius: 2px;
}

.plist__row--on {
  background: #bcd6f6;
}

.plist__thumb {
  position: absolute;
  left: 329px;
  top: 45px;
  width: 9px;
  height: 137px;
  border-radius: 5px;
  background: #c9c9c9;
}

.ltools {
  display: flex;
  align-items: center;
  gap: 14px;
  height: 33px;
  flex: none;
  box-sizing: border-box;
  padding-left: 5px;
  padding-bottom: 3px;
  color: #4a4a4a;
}

.ltools .ptool b {
  margin-left: 4px;
}

.ltable {
  display: flex;
  flex-direction: column;
  margin-right: 2px;
}

.ltable__row {
  display: grid;
  grid-template-columns: 64px 45px 1fr;
  box-sizing: border-box;
  height: 26px;
  border-bottom: 1px solid #e2e2e2;
}

.ltable__row--head {
  border-top: 1px solid #e2e2e2;
}

.ltable__row > span {
  display: flex;
  align-items: center;
  justify-content: center;
  border-right: 1px solid #e2e2e2;
}

.ltable__row > .ltable__name {
  justify-content: flex-start;
  padding-left: 5px;
}

.check {
  box-sizing: border-box;
  width: 17px;
  height: 17px;
  border: 1px solid #9b9b9b;
  border-radius: 3px;
  background: #fff;
}

.check--on {
  position: relative;
  border-color: #2a7bdc;
  background: #2a7bdc;
}

.check--on::after {
  content: "";
  position: absolute;
  left: 4.5px;
  top: 1.5px;
  width: 4px;
  height: 8px;
  border: solid #fff;
  border-width: 0 2px 2px 0;
  transform: rotate(40deg);
}

.tri {
  margin-left: 5px;
  border-left: 4px solid #666;
  border-top: 4px solid transparent;
  border-bottom: 4px solid transparent;
}

.splitter {
  position: relative;
  width: 5px;
  flex: none;
  background: #f5f5f5;
}

.splitter__handle {
  position: absolute;
  left: 0;
  top: 330px;
  width: 5px;
  height: 126px;
  background: #6c727a;
}

/* Canvas ---------------------------------------------------------- */
.canvas {
  position: relative;
  width: 1355px;
  flex: none;
  overflow: hidden;
}

.scene {
  display: block;
}

.scene__axis {
  font-family: "Liberation Sans", sans-serif;
  font-size: 20px;
  text-anchor: middle;
  fill: #ddd;
}

.scene__x {
  font-family: "Liberation Sans", sans-serif;
  font-size: 14px;
  text-anchor: middle;
  fill: #e02020;
}

.scene__y {
  font-family: "Liberation Sans", sans-serif;
  font-size: 14px;
  text-anchor: middle;
  fill: #2fb08a;
}

.subtitle {
  position: absolute;
  left: 391px;
  top: 685px;
  font-size: 62px;
  font-weight: 500;
  line-height: 80px;
  color: #fff;
  white-space: nowrap;
}

.viewbar {
  position: absolute;
  right: 0;
  top: 1px;
  display: flex;
  flex-direction: column;
  align-items: center;
  gap: 7px;
  box-sizing: border-box;
  width: 41px;
  height: 307px;
  padding: 14px 3px 0 0;
  background: #fff;
}

.viewbar__tri {
  margin-top: 1.5px;
  border-left: 4px solid transparent;
  border-right: 4px solid transparent;
  border-top: 5px solid #555;
}

.viewbar__rule {
  width: 28px;
  height: 1px;
  background: #999;
}

.recorder {
  position: absolute;
  left: 1246px;
  top: 248px;
  width: 52px;
  height: 58px;
  background: #fff;
}

.recorder__top {
  display: flex;
  justify-content: space-between;
  height: 28px;
  padding-top: 1px;
  box-sizing: border-box;
  font-family: "Liberation Sans", sans-serif;
  font-size: 14px;
  line-height: 28px;
  color: #8fa0a8;
}

.recorder__top span {
  padding-left: 3px;
}

.recorder__top i {
  width: 26px;
  background: #e6e6e6;
}

.recorder__btn {
  box-sizing: border-box;
  width: 50px;
  height: 25px;
  margin: 4px 0 0 1px;
  border: 2px solid #1a66a8;
  background: #e1e1e1;
  font-family: "Liberation Sans", sans-serif;
  font-size: 13px;
  line-height: 21px;
  text-align: center;
  color: #111;
}

/* Status bar ------------------------------------------------------ */
.status {
  display: flex;
  align-items: center;
  height: 40px;
  flex: none;
  padding-left: 1px;
  box-sizing: border-box;
  border-top: 1px solid #dfdfdf;
  font-size: 14.5px;
}

.status__txt {
  flex: none;
  white-space: nowrap;
}

.status__txt--wide {
  letter-spacing: 1px;
}

.status__txt--mid {
  letter-spacing: 0.6px;
}

.status__btns {
  display: flex;
  flex: none;
}

.sbtn {
  display: flex;
  align-items: center;
  justify-content: center;
  box-sizing: border-box;
  height: 30px;
  border: 1px solid #c9c9c9;
  border-radius: 4px;
}

.sbtn--on {
  border-color: #6ea6e6;
  background: #d8e8fa;
}

.status__hint {
  margin-left: 8px;
  font-size: 15px;
  white-space: nowrap;
}

/* Taskbar --------------------------------------------------------- */
.taskbar {
  display: flex;
  height: 50px;
  flex: none;
  color: #e8e8e8;
  background: #1c1f1e;
}

.tb-cortana {
  box-sizing: border-box;
  flex: none;
  width: 19px;
  height: 19px;
  margin: 16px 91px 0 21px;
  border: 3px solid #f2f2f2;
  border-radius: 50%;
}

.tb-slot {
  display: flex;
  align-items: center;
  flex: none;
  width: 0;
  margin-left: -50px;
  margin-right: 50px;
}

.tb-slot--we {
  width: 73px;
  margin: 0;
  padding-left: 19px;
  box-sizing: border-box;
}

.tb-app {
  display: flex;
  align-items: center;
  flex: none;
  box-sizing: border-box;
  padding-left: 8px;
  white-space: nowrap;
}

.tb-app span {
  margin-left: 3px;
  font-size: 15px;
}

.tb-app--open {
  border-bottom: 3px solid #5db9c8;
}

.tb-app--gap {
  margin-left: 11px;
}

.tb-app--active {
  margin-left: 6px;
  padding-left: 13px;
  background: #3e3e3e;
}

.tray {
  display: flex;
  align-items: center;
  flex: 1;
  padding-left: 440px;
}

.tray > :nth-child(2) {
  margin-left: 28px;
}

.tray > :nth-child(3) {
  margin-left: 11px;
}

.tray > :nth-child(4) {
  margin-left: 15px;
}

.tray__a {
  margin-left: 12px;
  font-size: 18px;
  color: #eee;
}

.tray__sogou {
  box-sizing: border-box;
  width: 20px;
  height: 20px;
  margin-left: 20px;
  border-radius: 4px;
  font-size: 17px;
  font-weight: 700;
  line-height: 20px;
  text-align: center;
  color: #fff;
  background: #e8722c;
}

.tray__clock {
  display: flex;
  flex-direction: column;
  align-items: center;
  gap: 3px;
  margin-left: 25px;
  width: 74px;
  font-size: 15px;
  line-height: 20px;
}

.tray__clock + .ico {
  margin-left: 23px;
}

/* Outside the captured window ------------------------------------- */
.outside {
  flex: 1;
  background: #000;
}

.outside__top {
  height: 135px;
  padding: 58px 0 0 101px;
  box-sizing: border-box;
  overflow: hidden;
  font-size: 19px;
  color: #ddd;
  background: #0f0f0f;
}

.cursor {
  position: absolute;
}

.cursor--a {
  left: 393px;
  top: 504px;
}

.cursor--b {
  left: 155px;
  top: 1052px;
}
</style>
